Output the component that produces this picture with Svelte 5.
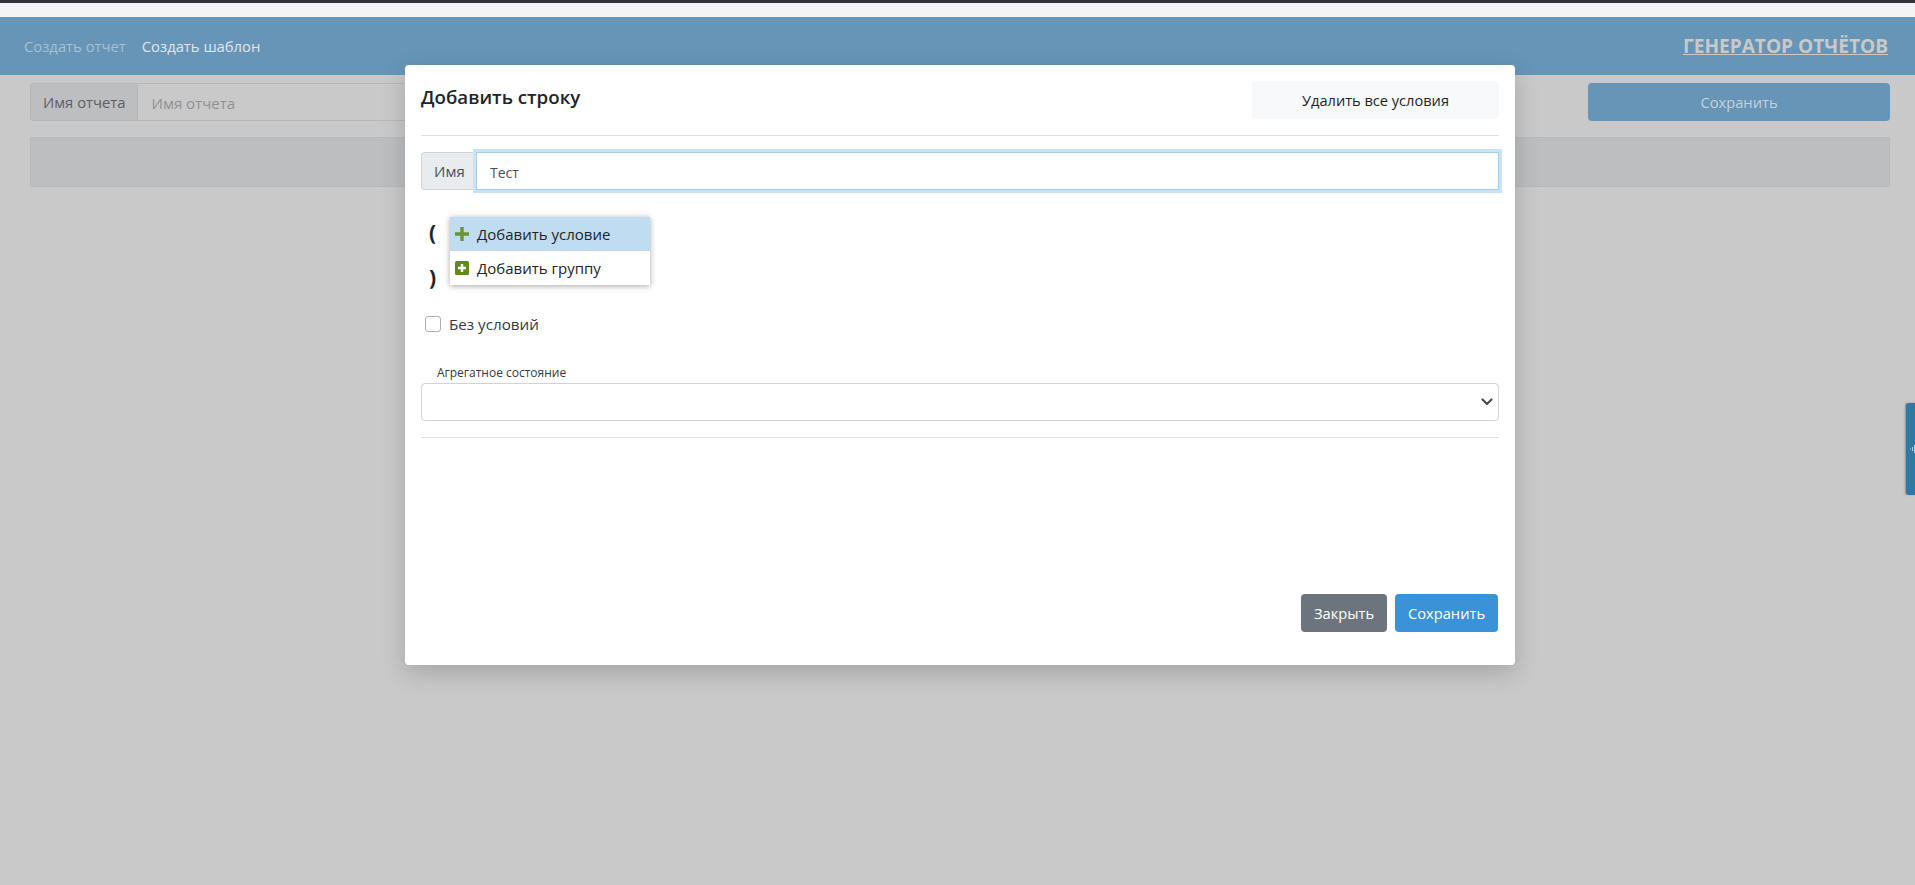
<script>
	let reportName = '';
	let rowName = 'Тест';
	let noConditions = false;
</script>

<div class="page">
	<div class="browser-line"></div>
	<div class="browser-strip"></div>

	<nav class="navbar">
		<div class="nav-links">
			<span class="nav-link muted">Создать отчет</span>
			<span class="nav-link">Создать шаблон</span>
		</div>
		<span class="brand">ГЕНЕРАТОР ОТЧЁТОВ</span>
	</nav>

	<main class="content">
		<div class="toolbar">
			<div class="input-group report-name">
				<span class="addon">Имя отчета</span>
				<input class="field" placeholder="Имя отчета" bind:value={reportName} />
			</div>
			<button class="btn-save-top">Сохранить</button>
		</div>
		<div class="table-head"></div>
	</main>

	<div class="side-tab">
		<svg width="5" height="10" viewBox="0 0 5 10"><path d="M0 4.5h1v1H0zM2 3h1v4H2zM4 1h1v8H4z" fill="#a9d3ea" /></svg>
	</div>

	<div class="modal">
		<div class="modal-header">
			<h5>Добавить строку</h5>
			<button class="btn-light">Удалить все условия</button>
		</div>

		<div class="modal-body">
			<div class="input-group name-group">
				<span class="addon">Имя</span>
				<input class="field focused" bind:value={rowName} />
			</div>

			<div class="conditions">
				<div class="brackets">
					<span>(</span>
					<span>)</span>
				</div>
				<ul class="menu">
					<li class="active">
						<svg width="14" height="14" viewBox="0 0 14 14"><path d="M5.3 0h3.4v5.3H14v3.4H8.7V14H5.3V8.7H0V5.3h5.3z" fill="#6a9432" /></svg>
						Добавить условие
					</li>
					<li>
						<svg width="14" height="14" viewBox="0 0 14 14"><rect width="14" height="14" rx="1.5" fill="#5f8a1e" /><path d="M5.8 3h2.4v2.8H11v2.4H8.2V11H5.8V8.2H3V5.8h2.8z" fill="#fff" /></svg>
						Добавить группу
					</li>
				</ul>
			</div>

			<label class="check">
				<input type="checkbox" bind:checked={noConditions} />
				<span>Без условий</span>
			</label>

			<div class="caption">Агрегатное состояние</div>
			<div class="select">
				<svg width="12" height="8" viewBox="0 0 12 8"><path d="M1.5 1.5 6 6l4.5-4.5" fill="none" stroke="#4a4f54" stroke-width="2.2" stroke-linecap="round" stroke-linejoin="round" /></svg>
			</div>
		</div>

		<div class="modal-footer">
			<button class="btn btn-gray">Закрыть</button>
			<button class="btn btn-blue">Сохранить</button>
		</div>
	</div>
</div>

<style>
	:global(body) {
		margin: 0;
		background: #c9c9c9;
		font-family: 'Open Sans', 'Noto Sans', sans-serif;
	}

	.page {
		position: relative;
		height: 885px;
		overflow: hidden;
		background: #c9c9c9;
		color: #212529;
		font-size: 14px;
	}

	.browser-line {
		height: 3px;
		background: #333438;
	}

	.browser-strip {
		height: 14px;
		background: #f4f4f4;
	}

	.navbar {
		height: 58px;
		box-sizing: border-box;
		padding: 0 27px 0 24px;
		display: flex;
		align-items: center;
		justify-content: space-between;
		background: #6795b7;
	}

	.nav-links {
		display: flex;
		gap: 16px;
	}

	.nav-link {
		color: #e2e6e9;
		font-size: 14.8px;
	}

	.nav-link.muted {
		color: #a4c0d3;
	}

	.brand {
		color: #c9c9c9;
		font-size: 19.1px;
		font-weight: 700;
		text-decoration: underline;
	}

	.content {
		padding: 8px 25px 0 30px;
	}

	.toolbar {
		display: flex;
		justify-content: space-between;
		height: 38px;
	}

	.input-group {
		display: flex;
		height: 38px;
		box-sizing: border-box;
	}

	.report-name {
		width: 900px;
	}

	.addon {
		display: flex;
		align-items: center;
		padding: 0 12px;
		box-sizing: border-box;
		border: 1px solid #b5b7b9;
		border-right: 0;
		border-radius: 4px 0 0 4px;
		background: #bdbec0;
		color: #5c6064;
		font-size: 14.8px;
	}

	.field {
		flex: 1;
		min-width: 0;
		box-sizing: border-box;
		padding: 2px 12px 0 13px;
		border: 1px solid #b5b7b9;
		background: #c9c9c9;
		font: inherit;
		font-size: 15px;
		outline: none;
	}

	.field::placeholder {
		color: #8f9193;
		opacity: 1;
	}

	.btn-save-top {
		width: 302px;
		height: 38px;
		border: 0;
		border-radius: 4px;
		background: #6795b7;
		color: #c4d2dc;
		font: inherit;
		font-size: 14.7px;
	}

	.table-head {
		height: 50px;
		margin-top: 16px;
		box-sizing: border-box;
		border: 1px solid #b8b9bb;
		background: #bdbec0;
	}

	.side-tab {
		position: absolute;
		top: 403px;
		right: 0;
		width: 9px;
		height: 92px;
		display: flex;
		align-items: center;
		justify-content: flex-end;
		border-radius: 3px 0 0 3px;
		background: #2d7aa6;
		box-shadow: -1px 0 2px rgba(0, 0, 0, 0.3);
	}

	.modal {
		position: absolute;
		top: 65px;
		left: 405px;
		width: 1110px;
		height: 600px;
		box-sizing: border-box;
		padding: 16px 16px 0;
		display: flex;
		flex-direction: column;
		background: #fff;
		border-radius: 4px;
		box-shadow: 0 8px 24px rgba(0, 0, 0, 0.18);
	}

	.modal-header {
		display: flex;
		justify-content: space-between;
		height: 55px;
		box-sizing: border-box;
		border-bottom: 1px solid #dfe1e3;
	}

	h5 {
		margin: 0;
		font-size: 18.7px;
		font-weight: 600;
		line-height: 32px;
	}

	.btn-light {
		width: 247px;
		height: 38px;
		border: 0;
		border-radius: 4px;
		background: #f8f9fa;
		color: #212529;
		font: inherit;
		font-size: 14.6px;
	}

	.modal-body {
		flex: 1;
		position: relative;
		padding-top: 16px;
	}

	.modal-body::after {
		content: '';
		display: block;
		margin-top: 16px;
		height: 1px;
		background: #dfe1e3;
	}

	.name-group .addon {
		background: #e9ecef;
		border-color: #ced4da;
		color: #495057;
		width: 55px;
		font-size: 15px;
	}

	.field.focused {
		background: #fff;
		color: #495057;
		font-size: 14px;
		border-color: #a3cdeb;
		box-shadow: 0 0 0 3px #cbe3f6;
	}

	.conditions {
		position: relative;
		height: 124px;
	}

	.brackets {
		position: absolute;
		top: 28px;
		left: 8px;
		display: flex;
		flex-direction: column;
		gap: 17px;
		font-size: 21px;
		font-weight: 700;
		line-height: 28px;
	}

	.menu {
		position: absolute;
		top: 27px;
		left: 29px;
		width: 200px;
		margin: 0;
		padding: 0;
		list-style: none;
		background: #fff;
		box-shadow: 0 1px 6px rgba(0, 0, 0, 0.35);
	}

	.menu li {
		display: flex;
		align-items: center;
		gap: 8px;
		height: 34px;
		padding-left: 5px;
		font-size: 15px;
	}

	.menu li.active {
		background: #bfdcf1;
	}

	.check {
		display: flex;
		align-items: center;
		gap: 8px;
		height: 20px;
		padding-left: 4px;
		color: #343a40;
		font-size: 15.2px;
	}

	.check input {
		appearance: none;
		width: 16px;
		height: 16px;
		margin: 0;
		border: 1px solid #a9afb5;
		border-radius: 3px;
		background: #fff;
	}

	.caption {
		margin-top: 30px;
		padding-left: 16px;
		height: 19px;
		font-size: 12px;
		line-height: 18px;
		color: #343a40;
	}

	.select {
		height: 38px;
		box-sizing: border-box;
		display: flex;
		align-items: center;
		justify-content: flex-end;
		padding-right: 5px;
		border: 1px solid #ced4da;
		border-radius: 4px;
	}

	.modal-footer {
		display: flex;
		justify-content: flex-end;
		gap: 8px;
		height: 71px;
		padding-right: 1px;
		box-sizing: border-box;
	}

	.btn {
		height: 38px;
		border: 0;
		border-radius: 4px;
		color: #fff;
		font: inherit;
		font-size: 14.7px;
	}

	.btn-gray {
		width: 86px;
		background: #6c757d;
	}

	.btn-blue {
		width: 103px;
		background: #3a93d6;
	}
</style>
